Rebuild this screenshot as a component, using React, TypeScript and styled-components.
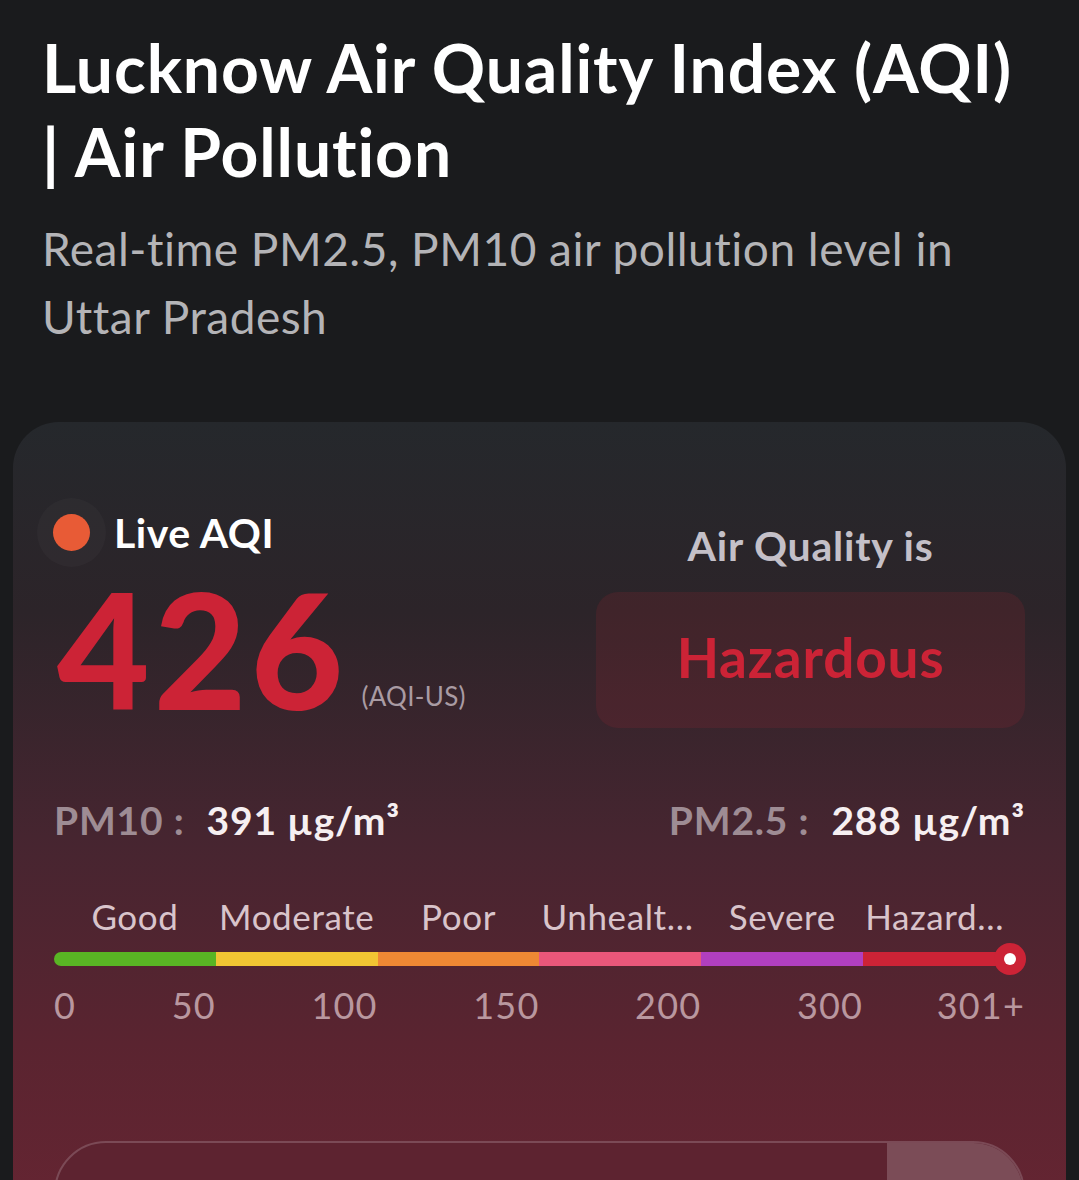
import React from "react";
import styled, { createGlobalStyle } from "styled-components";

const GlobalStyle = createGlobalStyle`
  html, body {
    margin: 0;
    padding: 0;
    background: #1a1b1d;
  }
  body {
    font-family: "Lato", "Noto Sans", sans-serif;
    color: #ffffff;
    -webkit-font-smoothing: antialiased;
  }
  * { box-sizing: border-box; }
`;

const Page = styled.div`
  width: 1079px;
  min-height: 1180px;
  overflow: hidden;
  background: #1a1b1d;
`;

const Header = styled.header`
  padding: 26px 42px 0 42px;
`;

const Title = styled.h1`
  margin: 0;
  max-width: 985px;
  font-size: 66px;
  line-height: 84px;
  font-weight: 700;
  color: #ffffff;
  letter-spacing: 0.9px;
`;

const Subtitle = styled.p`
  margin: 21px 0 0 0;
  font-size: 46px;
  line-height: 68px;
  font-weight: 400;
  color: #b4b4b7;
  letter-spacing: 0.5px;
`;

const Card = styled.section`
  margin: 71px 13px 0 13px;
  padding: 86px 41px 40px 41px;
  border-radius: 46px;
  background: linear-gradient(180deg, #25282c 0%, #2c2429 22%, #462530 48%, #5a2430 72%, #6a2533 100%);
`;

const TopRow = styled.div`
  display: grid;
  grid-template-columns: 1fr 429px;
  column-gap: 24px;
`;

const LeftCol = styled.div`
  display: flex;
  flex-direction: column;
  gap: 12px;
`;

const LiveRow = styled.div`
  display: flex;
  align-items: center;
  height: 48px;
  gap: 24px;
`;

const LiveDot = styled.span`
  width: 37px;
  height: 37px;
  margin-left: -1px;
  border-radius: 50%;
  background: #e85b36;
  box-shadow: 0 0 0 16px rgba(255, 255, 255, 0.022);
  flex-shrink: 0;
`;

const LiveText = styled.span`
  font-size: 41px;
  font-weight: 700;
  color: #ffffff;
  letter-spacing: 0.5px;
`;

const AqiRow = styled.div`
  display: flex;
  align-items: baseline;
  gap: 14px;
  padding-left: 3px;
`;

const AqiValue = styled.span`
  font-size: 160px;
  line-height: 160px;
  font-weight: 900;
  color: #cc2336;
  letter-spacing: 4px;
`;

const AqiUnit = styled.span`
  font-size: 26px;
  font-weight: 400;
  color: #a99ba3;
  position: relative;
  top: -4px;
  letter-spacing: 0.3px;
`;

const RightCol = styled.div`
  display: flex;
  flex-direction: column;
  align-items: stretch;
  padding-top: 14px;
  gap: 22px;
`;

const StatusLabel = styled.div`
  text-align: center;
  font-size: 41px;
  line-height: 48px;
  font-weight: 700;
  color: #c4c0c8;
  letter-spacing: 0.8px;
`;

const StatusBox = styled.div`
  height: 136px;
  border-radius: 22px;
  background: rgba(204, 35, 54, 0.13);
  display: flex;
  align-items: center;
  justify-content: center;
  font-size: 55px;
  font-weight: 700;
  color: #cc2336;
  letter-spacing: 0.8px;
  padding-bottom: 6px;
`;

const PmRow = styled.div`
  margin-top: 68px;
  display: flex;
  justify-content: space-between;
  align-items: center;
  height: 48px;
`;

const PmItem = styled.div`
  display: flex;
  align-items: baseline;
  font-size: 39px;
  font-weight: 700;
  letter-spacing: 0.8px;
`;

const PmLabel = styled.span`
  color: #9e8c94;
  margin-right: 22px;
`;

const PmValue = styled.span`
  color: #f6eff1;
`;

const Scale = styled.div`
  margin-top: 50px;
`;

const ScaleLabels = styled.div`
  display: grid;
  grid-template-columns: repeat(6, 1fr);
  height: 44px;
  align-items: center;
`;

const ScaleLabel = styled.span`
  text-align: center;
  font-size: 35px;
  font-weight: 400;
  color: #d9c4cb;
  letter-spacing: 0.6px;
  white-space: nowrap;
  overflow: hidden;
  text-overflow: ellipsis;
  padding: 0 2px;
`;

const Bar = styled.div`
  position: relative;
  margin-top: 14px;
  height: 14px;
  display: grid;
  grid-template-columns: repeat(6, 1fr);
  border-radius: 7px;
`;

const Segment = styled.div<{ $color: string; $first?: boolean; $last?: boolean }>`
  background: ${(p) => p.$color};
  border-radius: ${(p) => (p.$first ? "7px 0 0 7px" : p.$last ? "0 7px 7px 0" : "0")};
`;

const Knob = styled.div`
  position: absolute;
  top: 50%;
  width: 32px;
  height: 32px;
  margin-left: -16px;
  margin-top: -16px;
  border-radius: 50%;
  background: #cc2336;
  display: flex;
  align-items: center;
  justify-content: center;
  &::after {
    content: "";
    width: 12px;
    height: 12px;
    border-radius: 50%;
    background: #ffffff;
  }
`;

const ScaleNumbers = styled.div`
  margin-top: 17px;
  display: grid;
  grid-template-columns: repeat(6, 1fr);
  height: 40px;
  align-items: center;
`;

const NumberCell = styled.div`
  display: flex;
  justify-content: flex-end;
  font-size: 36px;
  font-weight: 400;
  color: #b9979f;
  letter-spacing: 1.2px;
  &:first-child {
    justify-content: space-between;
  }
`;

const SearchBar = styled.div`
  margin-top: 118px;
  height: 104px;
  border-radius: 52px;
  border: 2px solid #7b4a56;
  background: #5d2330;
  display: flex;
  overflow: hidden;
`;

const SearchField = styled.div`
  flex: 1;
`;

const SearchButton = styled.div`
  width: 136px;
  background: #7b4c57;
  display: flex;
  align-items: center;
  justify-content: center;
`;

const ButtonCircle = styled.div`
  width: 44px;
  height: 44px;
  border-radius: 50%;
  background: #ffffff;
  margin-top: 20px;
  margin-left: -2px;
`;

const categories = [
  { label: "Good", color: "#59b524", max: 50 },
  { label: "Moderate", color: "#f1c533", max: 100 },
  { label: "Poor", color: "#ee8834", max: 150 },
  { label: "Unhealthy", color: "#e9577a", max: 200 },
  { label: "Severe", color: "#b13fbf", max: 300 },
  { label: "Hazardous", color: "#cc2336", max: 400 },
];

const numbers = ["50", "100", "150", "200", "300", "301+"];

function knobPosition(aqi: number): number {
  let prev = 0;
  for (let i = 0; i < categories.length; i++) {
    const c = categories[i];
    if (aqi <= c.max) {
      return (i + (aqi - prev) / (c.max - prev)) / categories.length;
    }
    prev = c.max;
  }
  return 1;
}

export default function App() {
  const aqi = 426;
  const pct = knobPosition(aqi);
  return (
    <Page>
      <GlobalStyle />
      <Header>
        <Title>Lucknow Air Quality Index (AQI) | Air Pollution</Title>
        <Subtitle>Real-time PM2.5, PM10 air pollution level in Uttar Pradesh</Subtitle>
      </Header>
      <Card>
        <TopRow>
          <LeftCol>
            <LiveRow>
              <LiveDot />
              <LiveText>Live AQI</LiveText>
            </LiveRow>
            <AqiRow>
              <AqiValue>{aqi}</AqiValue>
              <AqiUnit>(AQI-US)</AqiUnit>
            </AqiRow>
          </LeftCol>
          <RightCol>
            <StatusLabel>Air Quality is</StatusLabel>
            <StatusBox>Hazardous</StatusBox>
          </RightCol>
        </TopRow>

        <PmRow>
          <PmItem>
            <PmLabel>PM10 :</PmLabel>
            <PmValue>391 µg/m³</PmValue>
          </PmItem>
          <PmItem>
            <PmLabel>PM2.5 :</PmLabel>
            <PmValue>288 µg/m³</PmValue>
          </PmItem>
        </PmRow>

        <Scale>
          <ScaleLabels>
            {categories.map((c) => (
              <ScaleLabel key={c.label}>{c.label}</ScaleLabel>
            ))}
          </ScaleLabels>
          <Bar>
            {categories.map((c, i) => (
              <Segment key={c.label} $color={c.color} $first={i === 0} $last={i === categories.length - 1} />
            ))}
            <Knob style={{ left: `calc(${pct * 100}% - ${pct * 15}px)` }} />
          </Bar>
          <ScaleNumbers>
            {numbers.map((n, i) => (
              <NumberCell key={n}>
                {i === 0 && <span>0</span>}
                <span>{n}</span>
              </NumberCell>
            ))}
          </ScaleNumbers>
        </Scale>

        <SearchBar>
          <SearchField />
          <SearchButton>
            <ButtonCircle />
          </SearchButton>
        </SearchBar>
      </Card>
    </Page>
  );
}
